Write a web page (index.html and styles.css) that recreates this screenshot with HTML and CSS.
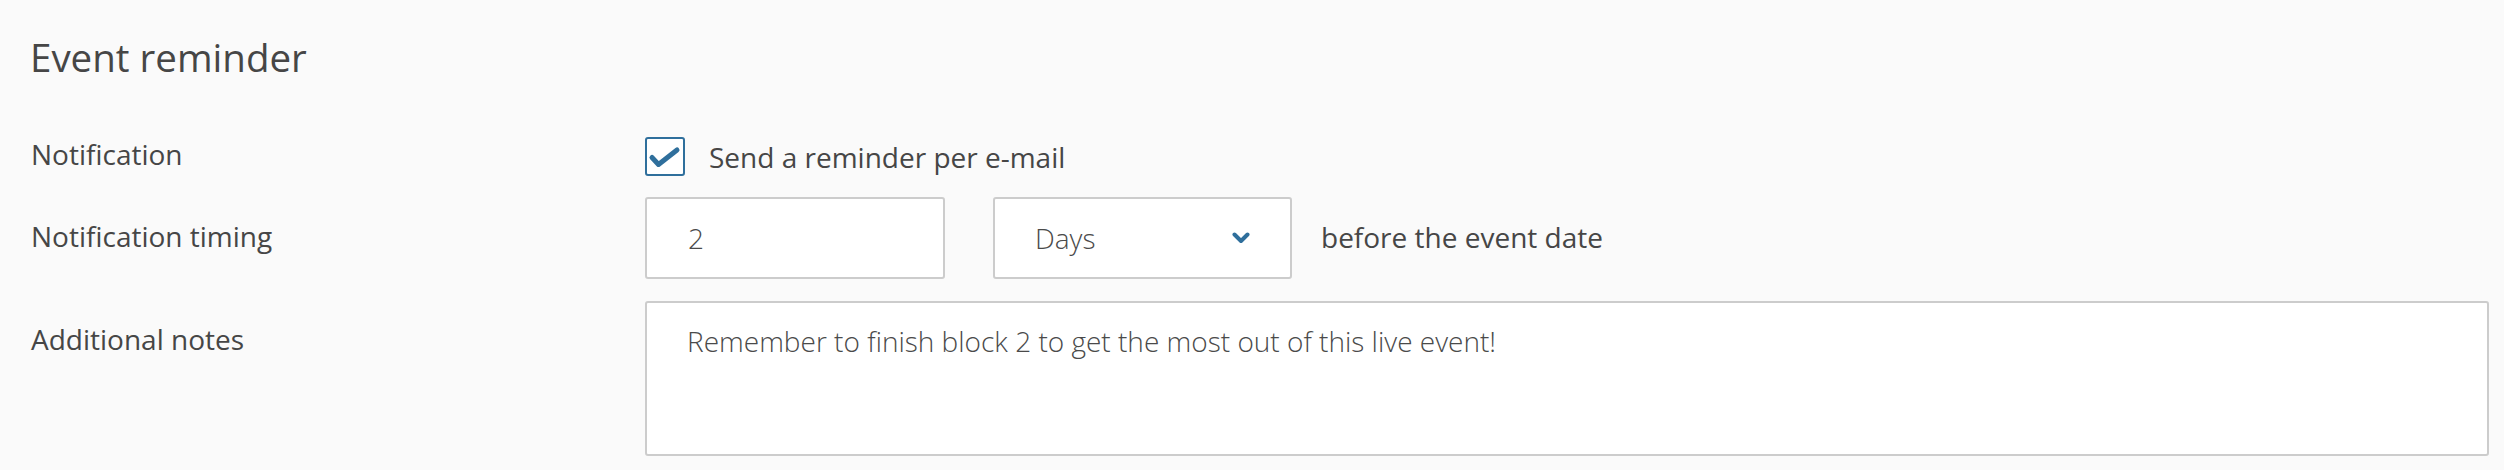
FILE: index.html
```html
<!DOCTYPE html>
<html lang="en">
<head>
<meta charset="utf-8">
<title>Event reminder</title>
<link rel="stylesheet" href="styles.css">
</head>
<body>
<section class="panel">
  <h2 class="panel-title">Event reminder</h2>
  <div class="form-grid">
    <div class="label label-check">Notification</div>
    <label class="check-row">
      <span class="checkbox">
        <svg viewBox="0 0 40 40" width="40" height="40" aria-hidden="true">
          <polyline points="7,20.5 13.5,27.5 32,13" fill="none" stroke="#2f6f9c" stroke-width="5" stroke-linecap="round" stroke-linejoin="round"/>
        </svg>
      </span>
      <span class="check-text">Send a reminder per e-mail</span>
    </label>

    <div class="label">Notification timing</div>
    <div class="timing-row">
      <input class="field field-number" type="text" value="2">
      <div class="select-wrap">
        <select class="field field-select">
          <option>Days</option>
        </select>
        <svg class="chevron" viewBox="0 0 18 12" width="18" height="12" aria-hidden="true">
          <polyline points="2.5,2.5 9,9 15.5,2.5" fill="none" stroke="#2f6f9c" stroke-width="4" stroke-linecap="round" stroke-linejoin="round"/>
        </svg>
      </div>
      <span class="after-text">before the event date</span>
    </div>

    <div class="label">Additional notes</div>
    <textarea class="field field-notes">Remember to finish block 2 to get the most out of this live event!</textarea>
  </div>
</section>
</body>
</html>
```

FILE: styles.css
```css
html, body {
  margin: 0;
  padding: 0;
  background: #fafafa;
}

body {
  font-family: "Open Sans", "Liberation Sans", sans-serif;
  color: #464646;
  width: 2504px;
  height: 470px;
  overflow: hidden;
}

.panel {
  padding: 31px 15px 0 31px;
}

.panel-title {
  margin: 0;
  font-size: 38.5px;
  line-height: 53px;
  font-weight: 400;
  color: #464646;
  margin-left: -1px;
}

.form-grid {
  display: grid;
  grid-template-columns: 614px 1fr;
  grid-template-rows: 39px 82px 155px;
  row-gap: 21px;
  margin-top: 53px;
}

.form-grid > .field-notes {
  margin-top: 1px;
}

.label {
  font-size: 28px;
  line-height: 40px;
  padding-top: 19px;
  color: #464646;
}

.label.label-check {
  padding-top: 0;
  margin-top: -3px;
}

.check-row {
  display: flex;
  align-items: center;
  gap: 24px;
  font-size: 28px;
  line-height: 40px;
}

.checkbox {
  width: 40px;
  height: 39px;
  box-sizing: border-box;
  border: 2px solid #2f6f9c;
  border-radius: 3px;
  background: #fff;
  position: relative;
  flex: none;
}

.checkbox svg {
  position: absolute;
  left: -2px;
  top: -2px;
}

.check-text {
  color: #464646;
}

.timing-row {
  display: flex;
  align-items: center;
  gap: 48px;
}

.field {
  box-sizing: border-box;
  border: 2px solid #cccccc;
  border-radius: 3px;
  background: #ffffff;
  font-family: "Open Sans", "Liberation Sans", sans-serif;
  font-weight: 300;
  font-size: 28px;
  line-height: 40px;
  color: #4a4a4a;
  outline: none;
  margin: 0;
}

.field-number {
  width: 300px;
  height: 82px;
  padding: 0 0 0 41px;
}

.select-wrap {
  position: relative;
  width: 299px;
  height: 82px;
}

.field-select {
  appearance: none;
  -webkit-appearance: none;
  width: 100%;
  height: 100%;
  padding: 0 60px 0 40px;
}

.chevron {
  position: absolute;
  left: 239px;
  top: 35px;
  pointer-events: none;
}

.after-text {
  font-size: 28px;
  line-height: 40px;
  color: #464646;
  margin-left: -19px;
  margin-top: -2px;
}

.field-notes {
  width: 1844px;
  height: 155px;
  padding: 18px 40px 0 40px;
  resize: none;
  overflow: hidden;
  display: block;
}
```
